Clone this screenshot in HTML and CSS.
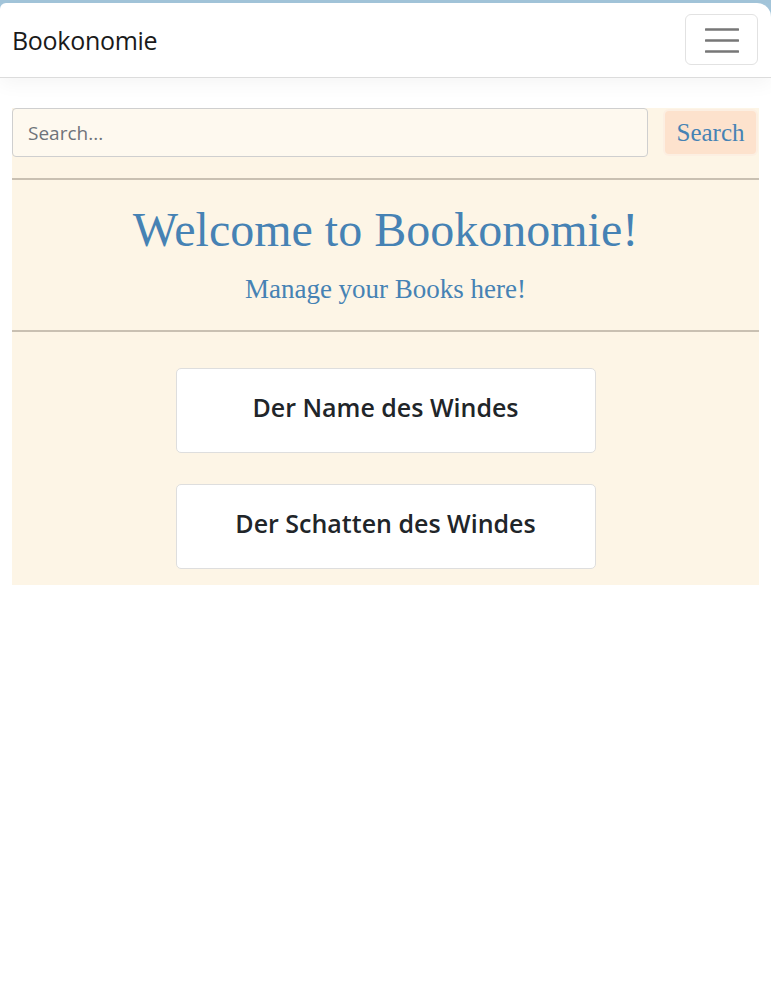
FILE: index.html
```html
<!DOCTYPE html>
<html lang="en">
<head>
<meta charset="utf-8">
<title>Bookonomie</title>
<link rel="stylesheet" href="styles.css">
</head>
<body>
<div class="page">
  <nav class="navbar">
    <a class="brand" href="#">Bookonomie</a>
    <button class="toggler" type="button" aria-label="Toggle navigation">
      <svg width="34" height="26" viewBox="0 0 34 26" aria-hidden="true">
        <path d="M1 2.5H33M1 13.5H33M1 24.5H33" stroke="#777" stroke-width="2.6" stroke-linecap="round"/>
      </svg>
    </button>
  </nav>
  <main class="main">
    <section class="panel">
      <form class="search-row">
        <input class="search-input" type="text" placeholder="Search...">
        <button class="search-btn" type="button">Search</button>
      </form>
      <hr class="rule rule-top">
      <header class="welcome">
        <h1 class="welcome-title">Welcome to Bookonomie!</h1>
        <p class="welcome-sub">Manage your Books here!</p>
      </header>
      <hr class="rule">
      <ul class="books">
        <li class="book-card">Der Name des Windes</li>
        <li class="book-card">Der Schatten des Windes</li>
      </ul>
    </section>
  </main>
</div>
</body>
</html>
```

FILE: styles.css
```css
html, body {
  margin: 0;
  padding: 0;
}
body {
  background: #a3c5da;
  font-family: "Open Sans", "Noto Sans", sans-serif;
}
.page {
  margin-top: 3px;
  background: #ffffff;
  border-radius: 6px 14px 0 0;
  min-height: 991px;
}
.navbar {
  height: 75px;
  box-sizing: border-box;
  border-bottom: 1px solid #dcdcdc;
  box-shadow: 0 6px 18px rgba(0, 0, 0, 0.045);
  display: flex;
  align-items: center;
  justify-content: space-between;
  padding: 0 13px 0 12px;
}
.brand {
  font-size: 25px;
  color: #1a1a1a;
  text-decoration: none;
  letter-spacing: -0.3px;
  margin-top: 0;
}
.toggler {
  width: 73px;
  height: 51px;
  box-sizing: border-box;
  border: 1px solid #e2e2e2;
  border-radius: 6px;
  background: #fff;
  display: flex;
  align-items: center;
  justify-content: center;
  padding: 0;
  margin-top: -1px;
}
.main {
  padding: 30px 12px 0 12px;
}
.panel {
  background: #fdf5e6;
  padding-bottom: 16px;
}
.search-row {
  display: flex;
  align-items: center;
  gap: 17px;
  margin: 0;
}
.search-input {
  width: 636px;
  height: 49px;
  box-sizing: border-box;
  border: 1px solid #cfcfcf;
  border-radius: 4px;
  background: #fef9ef;
  padding: 0 15px;
  font-family: "Open Sans", "Noto Sans", sans-serif;
  font-size: 19px;
  color: #333;
  outline: none;
}
.search-input::placeholder {
  color: #6f737a;
}
.search-btn {
  width: 91px;
  height: 43px;
  border: none;
  border-radius: 4px;
  background: #fde2cd;
  box-shadow: 0 0 0 2px #fcefe2;
  color: #4682b4;
  font-family: "Liberation Serif", "Times New Roman", serif;
  font-size: 25px;
  padding: 0;
}
.rule {
  border: none;
  border-top: 2px solid #c9c0b2;
  margin: 0;
}
.rule-top {
  margin-top: 21px;
}
.welcome {
  text-align: center;
  color: #4682b4;
  font-family: "Liberation Serif", "Times New Roman", serif;
  padding: 20px 0 24px;
}
.welcome-title {
  font-weight: normal;
  font-size: 48px;
  line-height: 60px;
  margin: 0;
}
.welcome-sub {
  font-size: 27px;
  line-height: 34px;
  margin: 12px 0 0;
}
.books {
  list-style: none;
  margin: 0;
  padding: 36px 0 0;
  display: flex;
  flex-direction: column;
  align-items: center;
  gap: 31px;
}
.book-card {
  width: 420px;
  height: 85px;
  box-sizing: border-box;
  background: #ffffff;
  border: 1px solid #dedede;
  border-radius: 5px;
  display: flex;
  align-items: center;
  justify-content: center;
  font-size: 25px;
  font-weight: 600;
  color: #212529;
  padding-bottom: 8px;
}
```
